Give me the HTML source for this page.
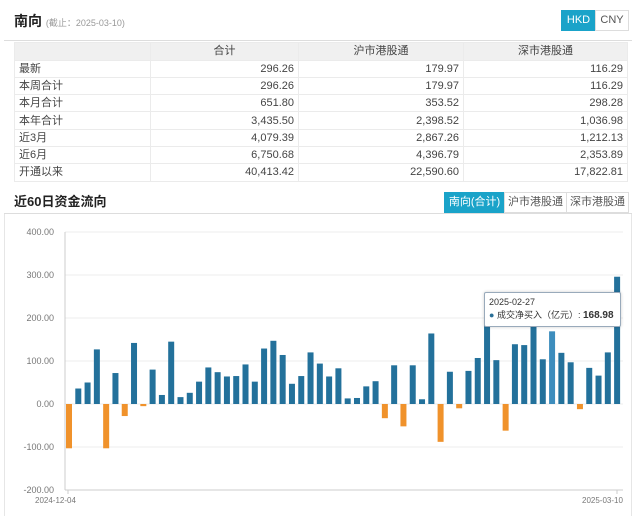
<!DOCTYPE html>
<html><head><meta charset="utf-8"><style>
body{margin:0;width:640px;height:516px;background:#fff;font-family:"Liberation Sans","Noto Sans CJK SC",sans-serif;color:#333;overflow:hidden;position:relative}
.abs{position:absolute}
table{border-collapse:collapse;font-size:11px;color:#444}
td{border:1px solid #ebebeb;height:16.3px;padding:0 4px;line-height:16px}
td.n{text-align:right}
tr.h td{background:#f0f0f0;text-align:center;height:16.5px}
.btn{position:absolute;font-size:11px;text-align:center;border:1px solid #ddd;color:#555;line-height:19px;height:19px}
.on{background:#1aa3c9;color:#fff;border-color:#1aa3c9}
</style></head><body>
<div class="abs" style="left:4px;top:40px;width:628px;border-top:1px solid #ddd"></div>
<div class="abs" style="left:14px;top:11px;font-size:14px;font-weight:bold;color:#222">南向 <span style="font-size:9px;font-weight:normal;color:#999">(截止：2025-03-10)</span></div>
<div class="btn on" style="left:561px;top:10px;width:33px">HKD</div>
<div class="btn" style="left:595px;top:10px;width:32px">CNY</div>
<table class="abs" style="left:14px;top:42px;width:614px">
<tr class="h"><td style="width:127px"></td><td style="width:139px">合计</td><td style="width:156px">沪市港股通</td><td>深市港股通</td></tr>
<tr><td>最新</td><td class="n">296.26</td><td class="n">179.97</td><td class="n">116.29</td></tr>
<tr><td>本周合计</td><td class="n">296.26</td><td class="n">179.97</td><td class="n">116.29</td></tr>
<tr><td>本月合计</td><td class="n">651.80</td><td class="n">353.52</td><td class="n">298.28</td></tr>
<tr><td>本年合计</td><td class="n">3,435.50</td><td class="n">2,398.52</td><td class="n">1,036.98</td></tr>
<tr><td>近3月</td><td class="n">4,079.39</td><td class="n">2,867.26</td><td class="n">1,212.13</td></tr>
<tr><td>近6月</td><td class="n">6,750.68</td><td class="n">4,396.79</td><td class="n">2,353.89</td></tr>
<tr><td>开通以来</td><td class="n">40,413.42</td><td class="n">22,590.60</td><td class="n">17,822.81</td></tr>
</table>
<div class="abs" style="left:4px;top:213px;width:628px;border-top:1px solid #ddd"></div>
<div class="abs" style="left:14px;top:194px;font-size:13px;font-weight:bold;color:#222;line-height:16px">近60日资金流向</div>
<div class="btn on" style="left:444px;top:192px;width:59px">南向(合计)</div>
<div class="btn" style="left:504px;top:192px;width:61px">沪市港股通</div>
<div class="btn" style="left:566px;top:192px;width:61px">深市港股通</div>
<div class="abs" style="left:4px;top:214px;width:626px;height:302px;border-left:1px solid #e6e6e6;border-right:1px solid #e6e6e6"></div>
<svg class="abs" style="left:0;top:0" width="640" height="516" id="c" font-family="Liberation Sans, sans-serif"></svg>
<div class="abs" style="left:484px;top:292px;width:135px;height:33px;background:#fff;border:1px solid #9ab;border-radius:2px;font-size:9px;color:#333;box-shadow:0 0 3px rgba(0,0,0,.2);white-space:nowrap;line-height:12px">
<div style="margin:3px 0 0 4px">2025-02-27</div>
<div style="margin:1px 0 0 4px"><span style="color:#2a6f97">●</span> 成交净买入（亿元）: <b style="font-size:10px">168.98</b></div>
</div>
<script>
var v=[-103,36,50,127,-103,72,-28,142,-5,80,21,145,16,26,52,85,74,64,65,92,52,129,147,114,47,65,120,94,64,83,13,14,41,53,-33,90,-52,90,11,164,-88,75,-10,77,107,255,102,-62,139,137,255,104,169,119,97,-12,84,66,120,296];
var s='',z=404,k=0.43;
var lab=['400.00','300.00','200.00','100.00','0.00','-100.00','-200.00'];
for(var i=0;i<7;i++){var y=232+i*43;s+='<line x1="65" x2="623" y1="'+y+'" y2="'+y+'" stroke="#eee"/>';s+='<text x="54" y="'+(y+3)+'" font-size="9" fill="#777" text-anchor="end">'+lab[i]+'</text>';}
s+='<line x1="65" x2="65" y1="232" y2="490" stroke="#ccc"/><line x1="65" x2="623" y1="490" y2="490" stroke="#ccc"/>';
for(var i=0;i<60;i++){var cx=69+i*9.29,h=Math.abs(v[i])*k,c=v[i]<0?'#f0922b':(i==52?'#3d8dbd':'#23719b');var y=v[i]<0?z:z-h;s+='<rect x="'+(cx-3)+'" y="'+y+'" width="6" height="'+h+'" fill="'+c+'"/>';}
s+='<line x1="68" x2="68" y1="490" y2="494" stroke="#ccc"/><line x1="617" x2="617" y1="490" y2="494" stroke="#ccc"/>';
s+='<text x="35" y="503" font-size="8" fill="#777">2024-12-04</text><text x="582" y="503" font-size="8" fill="#777">2025-03-10</text>';
document.getElementById('c').innerHTML=s;
</script>
</body></html>
